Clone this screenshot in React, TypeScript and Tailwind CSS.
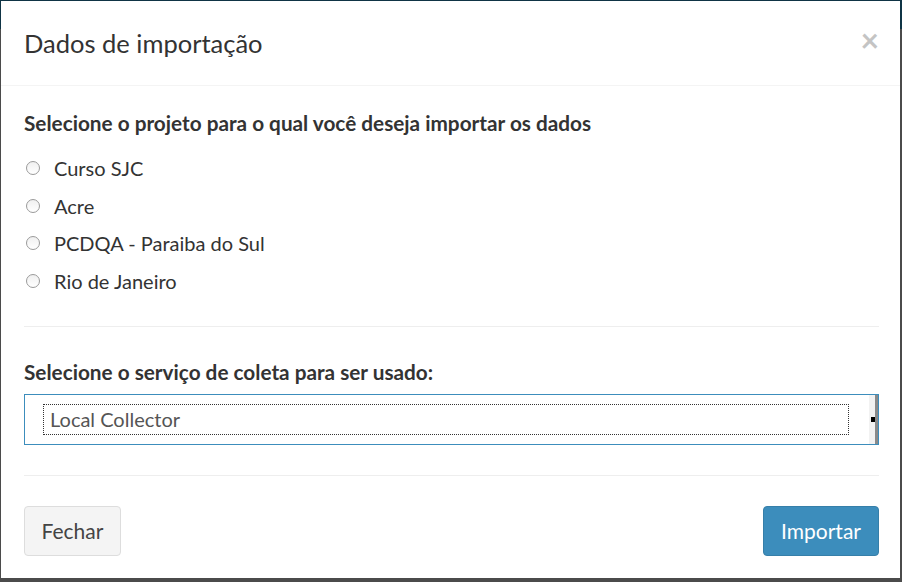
const PROJECTS = ['Curso SJC', 'Acre', 'PCDQA - Paraiba do Sul', 'Rio de Janeiro'];

function Radio({ label }: { label: string }) {
  return (
    <label className="flex items-center h-[30px] cursor-pointer">
      <span className="w-[14px] h-[14px] rounded-full border border-[#9a9a9a] bg-[linear-gradient(to_bottom,#f0f0f0,#ffffff)] shrink-0 ml-[2px]" />
      <span className="ml-[14px] text-[20px] text-[#333]">{label}</span>
    </label>
  );
}

export default function App() {
  return (
    <div
      className="w-[902px] h-[582px] pt-px pl-px pr-[2px] pb-[4px] bg-[linear-gradient(to_bottom,#0f3445_0,#0f3445_29px,#4b4b4b_29px)]"
      style={{ fontFamily: "Lato, 'Noto Sans', sans-serif" }}
    >
      <div className="w-full h-full bg-white flex flex-col">
        {/* header */}
        <div className="flex items-start justify-between pl-[23px] pr-[21px] pt-[23px] pb-[22px] border-b border-[#f4f4f4]">
          <h4 className="text-[25.5px] leading-[39px] text-[#333]">Dados de importação</h4>
          <button className="text-[32px] leading-[30px] font-bold text-[#c4c4c4] mt-[1px]">×</button>
        </div>

        {/* body */}
        <div className="pl-[23px] pr-[21px] pt-[22px] flex flex-col">
          <div className="text-[20.75px] leading-[30px] font-bold text-[#333]">
            Selecione o projeto para o qual você deseja importar os dados
          </div>
          <div className="mt-[15px] flex flex-col gap-[7.5px]">
            {PROJECTS.map((p) => (
              <Radio key={p} label={p} />
            ))}
          </div>

          <div className="mt-[30px] h-px bg-[#eeeeee]" />

          <div className="mt-[30px] text-[20.75px] leading-[30px] font-bold text-[#333]">
            Selecione o serviço de coleta para ser usado:
          </div>
          <div className="mt-[7px] h-[51px] border-[1.5px] border-[#3c8dbc] flex items-center relative">
            <div className="ml-[18px] w-[806px] h-[31px] border border-dotted border-[#333] flex items-center pl-[6px]">
              <span className="text-[20px] text-[#555]">Local Collector</span>
            </div>
            <div className="absolute right-0 top-0 bottom-0 w-[9px] bg-[#f2f2f2] border-r-[3px] border-[#8a8a8a] flex items-center">
              <div className="ml-[2px] w-[4px] h-[5px] bg-black" />
            </div>
          </div>
        </div>

        {/* footer */}
        <div className="mt-[30px] pl-[23px] pr-[21px]">
          <div className="h-px bg-[#eeeeee]" />
          <div className="flex justify-between pt-[30px]">
            <button className="w-[97px] h-[50px] rounded-[4px] bg-[#f4f4f4] border border-[#dddddd] text-[21px] text-[#444]">
              Fechar
            </button>
            <button className="w-[116px] h-[50px] rounded-[4px] bg-[#3c8dbc] border border-[#367fa9] text-[21px] text-white">
              Importar
            </button>
          </div>
        </div>
      </div>
    </div>
  );
}
